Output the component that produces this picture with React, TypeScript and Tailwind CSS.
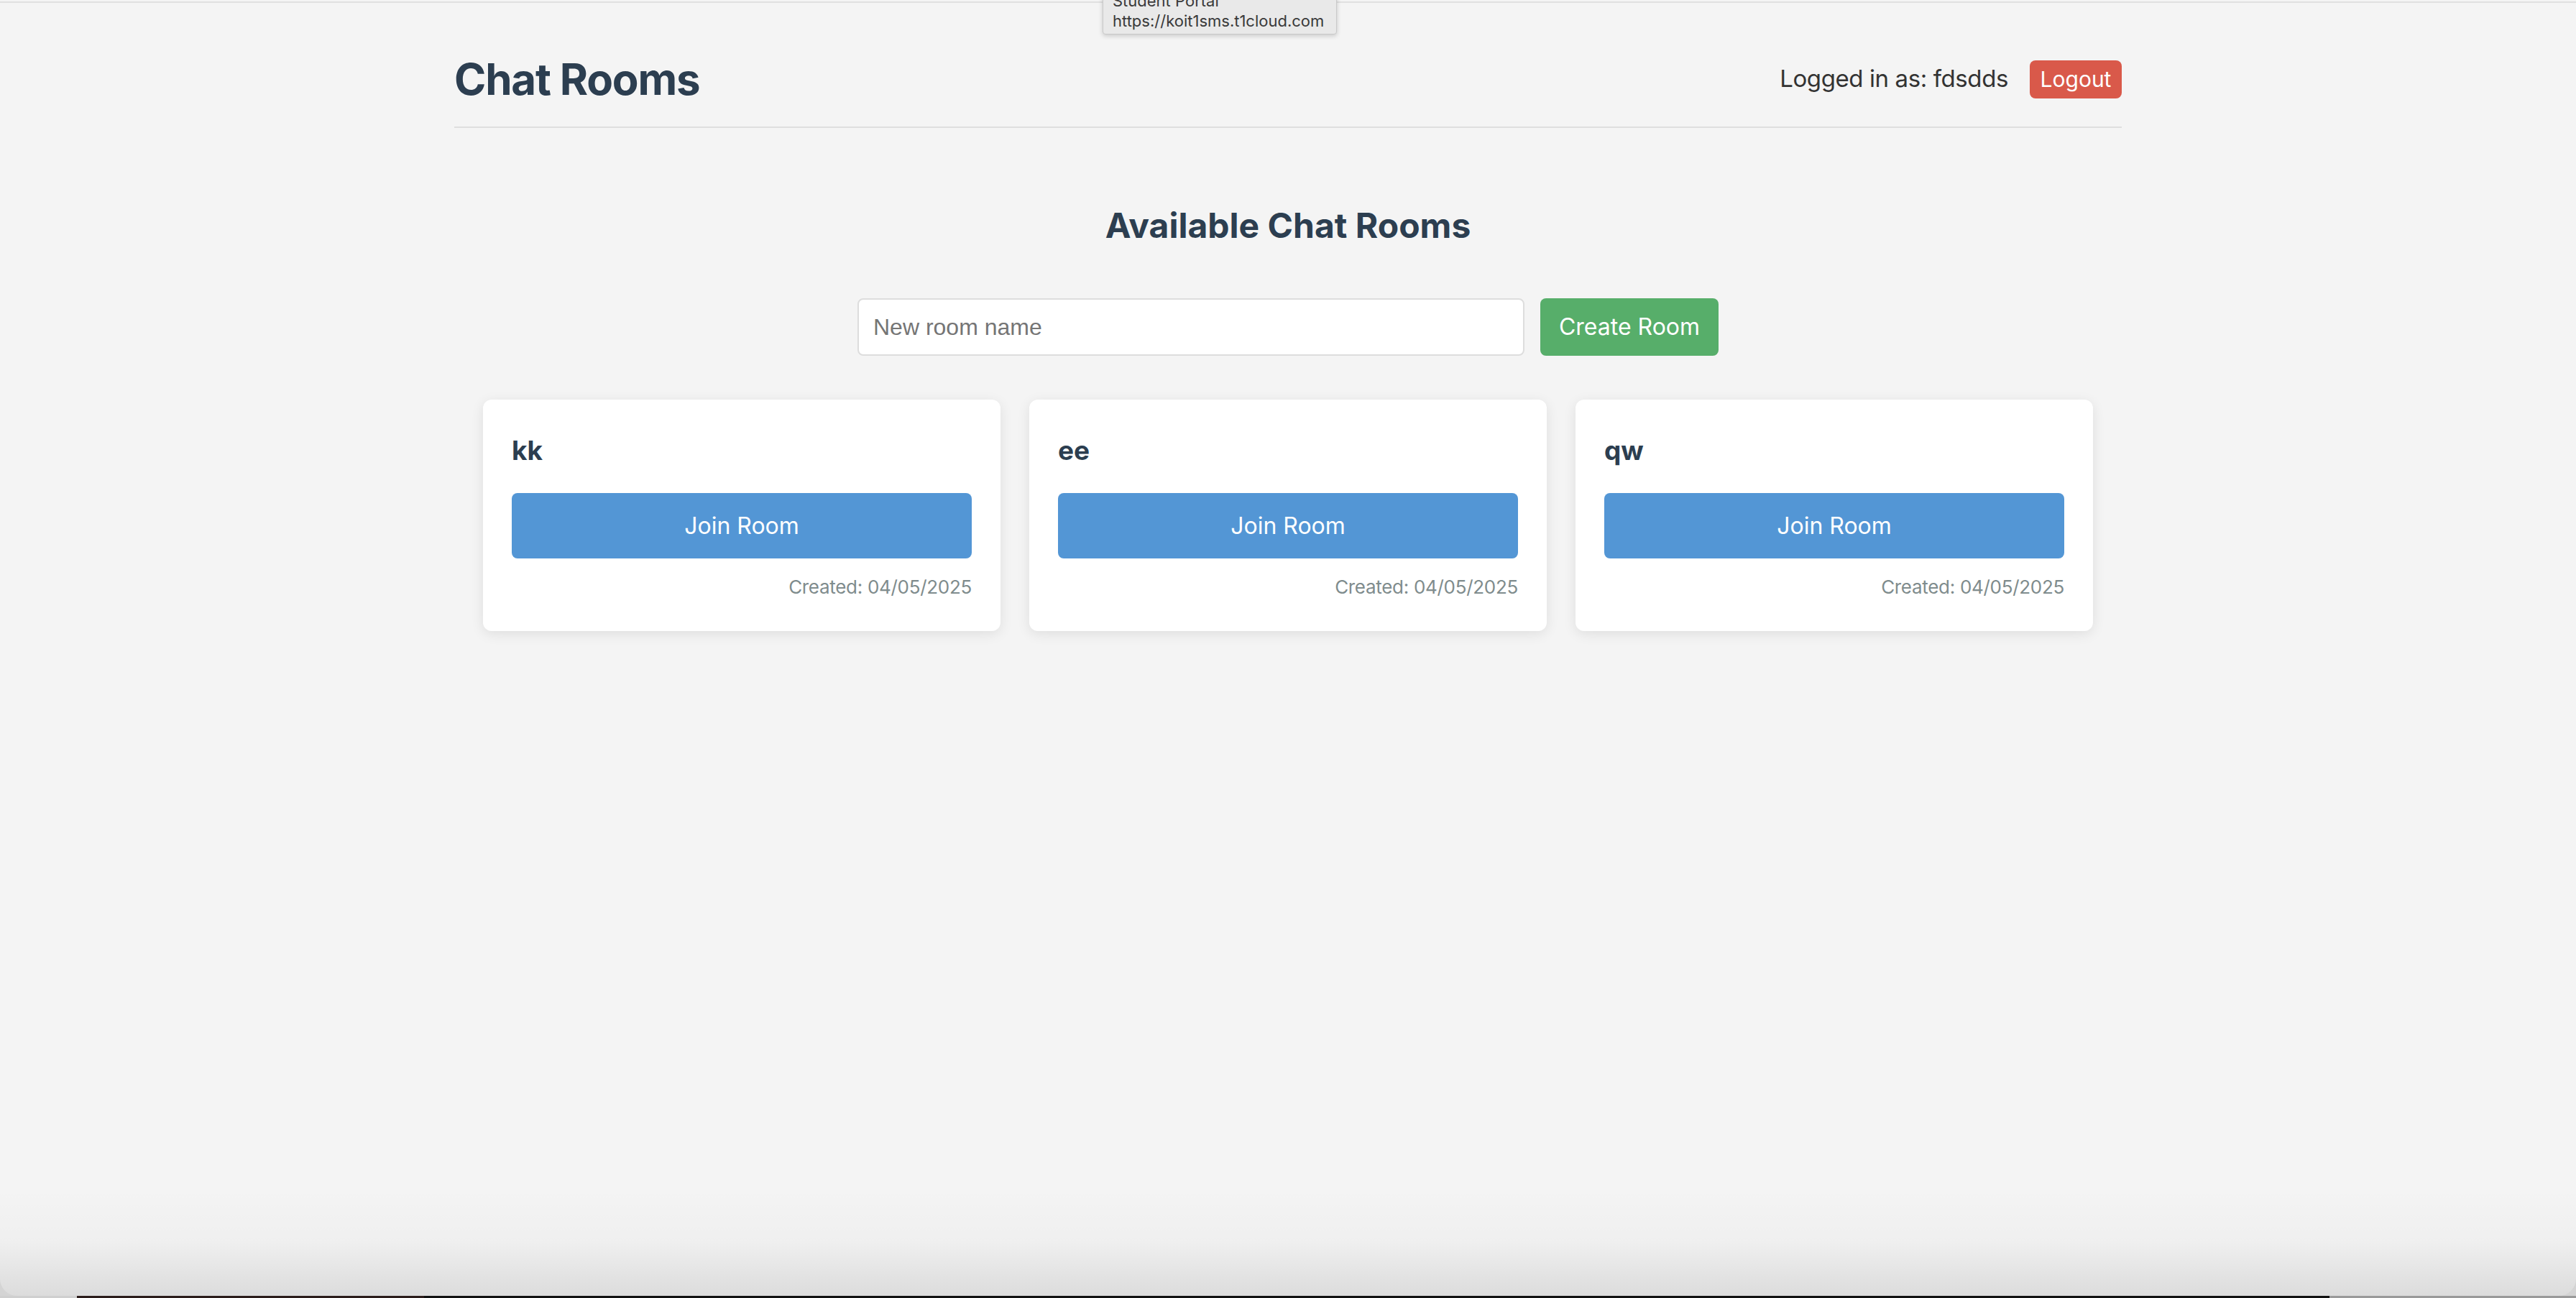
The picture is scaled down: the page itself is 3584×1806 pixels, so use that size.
import React, { useState } from "react";

type Room = {
  id: number;
  name: string;
  created: string;
};

const rooms: Room[] = [
  { id: 1, name: "kk", created: "04/05/2025" },
  { id: 2, name: "ee", created: "04/05/2025" },
  { id: 3, name: "qw", created: "04/05/2025" },
];

const RoomCard = ({ room }: { room: Room }) => {
  return (
    <div className="bg-white rounded-[12px] shadow-[0_4px_18px_rgba(0,0,0,0.09)] px-[40px] pt-[48px] pb-[44px] flex flex-col">
      <h3 className="text-[37px] leading-[45px] font-bold text-[#2c3e50]">{room.name}</h3>
      <button className="mt-[37px] h-[91px] w-full rounded-[8px] bg-[#5396d5] text-white text-[32px]">
        Join Room
      </button>
      <p className="mt-[23px] text-right text-[26px] leading-[34px] tracking-[-0.3px] text-[#7f8c8d]">
        Created: {room.created}
      </p>
    </div>
  );
};

const App = () => {
  const [roomName, setRoomName] = useState("");

  return (
    <div className="relative h-[1806px] overflow-hidden bg-[#d4d4d4] font-['Inter',sans-serif]">
      <div className="relative h-[1803px] rounded-b-[24px] bg-[#f4f4f4] overflow-hidden">
        <div className="h-[4px] border-b-2 border-[#e0e0e0]"></div>

        <div className="mx-auto w-[2320px]">
          {/* header */}
          <div className="flex items-center justify-between h-[174px] pt-[40px] border-b-2 border-[#dedede]">
            <h1 className="text-[60px] font-bold text-[#2c3e50] leading-[72px] tracking-[-1.2px]">Chat Rooms</h1>
            <div className="flex items-center gap-[30px]">
              <span className="text-[33px] tracking-[-0.4px] text-[#333333]">Logged in as: fdsdds</span>
              <button className="h-[53px] w-[128px] rounded-[8px] bg-[#d9594a] text-white text-[30px]">
                Logout
              </button>
            </div>
          </div>

          <h2 className="mt-[107px] text-center text-[48px] leading-[58px] font-bold text-[#2c3e50]">
            Available Chat Rooms
          </h2>

          <div className="mt-[72px] flex justify-center gap-[22px]">
            <input
              className="h-[80px] w-[928px] rounded-[8px] border-2 border-[#dddddd] bg-white px-[20px] text-[32px] font-['Liberation_Sans',Arial,sans-serif] placeholder:text-[#757575] outline-none"
              placeholder="New room name"
              value={roomName}
              onChange={(e) => setRoomName(e.target.value)}
            />
            <button className="h-[80px] w-[248px] rounded-[8px] bg-[#57ae6a] text-white text-[32px]">
              Create Room
            </button>
          </div>

          <div className="mt-[61px] grid grid-cols-3 gap-[40px] px-[40px]">
            {rooms.map((room) => (
              <RoomCard key={room.id} room={room} />
            ))}
          </div>
        </div>

        {/* bottom window shade */}
        <div className="absolute bottom-0 left-0 right-0 h-[150px] bg-linear-to-b from-black/0 via-black/[0.02] to-black/[0.1]"></div>

        {/* link tooltip */}
        <div className="absolute top-[-18px] left-[1534px] w-[326px] pl-[13px] pt-[4px] pb-[4px] rounded-[4px] border border-[#c9c9c9] bg-[#e9e9e9] shadow-[0_2px_6px_rgba(0,0,0,0.18)] text-[22px] leading-[28px] text-[#3a3a3a]">
          <div>Student Portal</div>
          <div>https://koit1sms.t1cloud.com</div>
        </div>
      </div>

      <div className="flex h-[3px]">
        <div className="w-[107px] bg-[#cfcfcf]"></div>
        <div className="w-[483px] bg-[#2b1d1b]"></div>
        <div className="flex-1 bg-[#111111]"></div>
        <div className="w-[343px] bg-[#9a9a9a]"></div>
      </div>
    </div>
  );
};

export default App;
